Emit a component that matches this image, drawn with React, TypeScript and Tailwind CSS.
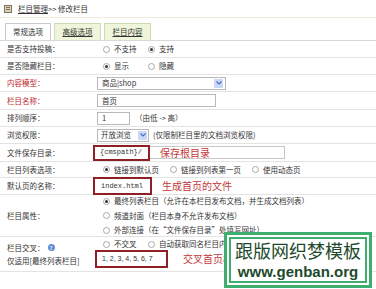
import React from "react";

const font = { fontFamily: '"Noto Sans CJK SC", "Noto Sans", sans-serif' };

const Radio: React.FC<{ on?: boolean }> = ({ on }) => (
  <span className="inline-flex h-[7px] w-[7px] shrink-0 items-center justify-center rounded-full border border-[#a8a8a8] bg-white">
    {on && <span className="h-[3px] w-[3px] rounded-full bg-[#333]" />}
  </span>
);

const Opt: React.FC<{ on?: boolean; label: React.ReactNode; slot?: string }> = ({ on, label, slot = "" }) => (
  <span className={`flex items-center gap-[4px] ${slot}`}>
    <Radio on={on} />
    <span>{label}</span>
  </span>
);

const Arrow: React.FC = () => (
  <span className="flex h-[9px] w-[9px] items-center justify-center rounded-[1px] bg-[#c9d8f6]">
    <svg width="6" height="4" viewBox="0 0 6 4">
      <path d="M0.5 0.5 L3 3 L5.5 0.5" stroke="#4a6fc0" strokeWidth="1.2" fill="none" />
    </svg>
  </span>
);

const Row: React.FC<{ label: React.ReactNode; h: string; children?: React.ReactNode; red?: boolean }> = ({
  label,
  h,
  children,
  red,
}) => (
  <div className={`flex border-b border-[#e3e3e3] ${h}`}>
    <div className={`flex w-[95px] shrink-0 items-center pl-[7px] ${red ? "text-[#c0282d]" : "text-[#333]"}`}>
      {label}
    </div>
    <div className="flex flex-1 items-center">{children}</div>
  </div>
);

export default function App() {
  return (
    <div className="relative h-[289px] w-[376px] overflow-hidden bg-white text-[7.5px] leading-none text-[#333]" style={font}>
      {/* header */}
      <div className="flex h-[17px] items-center gap-[6px] pl-[4px]">
        <svg width="8" height="8" viewBox="0 0 8 8">
          <rect x="0.5" y="0.5" width="7" height="7" fill="#d9d2b8" stroke="#7d7458" />
          <rect x="2" y="2" width="4" height="1" fill="#7d7458" />
          <rect x="2" y="4" width="4" height="1" fill="#7d7458" />
        </svg>
        <span>
          <span className="underline">栏目管理</span>&gt;&gt; 修改栏目
        </span>
      </div>

      {/* tabs */}
      <div className="flex h-[23px] items-end gap-[3px] border-t border-[#efeadb] pl-[5px]">
        <div className="flex h-[17px] w-[46px] items-center justify-center border border-b-0 border-[#c9c9c9] bg-white">
          常规选项
        </div>
        <div className="flex h-[17px] w-[47px] items-center justify-center border border-b-0 border-[#cfd9b5] bg-[#eef5da] underline">
          高级选项
        </div>
        <div className="flex h-[17px] w-[47px] items-center justify-center border border-b-0 border-[#cfd9b5] bg-[#eef5da] underline">
          栏目内容
        </div>
      </div>

      <div className="border-t border-[#d8d8d8]">
        <Row label="是否支持投稿：" h="h-[17px]">
          <div className="flex items-center pl-[8px]">
            <Opt label="不支持" slot="w-[45px]" />
            <Opt on label="支持" />
          </div>
        </Row>
        <Row label="是否隐藏栏目：" h="h-[17px]">
          <div className="flex items-center pl-[8px]">
            <Opt on label="显示" slot="w-[45px]" />
            <Opt label="隐藏" />
          </div>
        </Row>
        <Row label="内容模型：" h="h-[17px]" red>
          <div className="ml-[2px] flex h-[13px] w-[129px] items-center justify-between border border-[#b8b8b8] pl-[4px] pr-[2px]">
            <span>商品|shop</span>
            <Arrow />
          </div>
        </Row>
        <Row label="栏目名称：" h="h-[18px]" red>
          <div className="ml-[2px] flex h-[13px] w-[119px] items-center border border-[#b8b8b8] pl-[4px]">首页</div>
        </Row>
        <Row label="排列顺序：" h="h-[17px]">
          <div className="ml-[2px] flex h-[13px] w-[33px] items-center border border-[#b8b8b8] pl-[4px]">1</div>
          <span className="ml-[5px]">（由低 -&gt; 高）</span>
        </Row>
        <Row label="浏览权限：" h="h-[17px]">
          <div className="ml-[2px] flex h-[13px] w-[52px] items-center justify-between border border-[#b8b8b8] pl-[3px] pr-[1px]">
            <span>开放浏览</span>
            <Arrow />
          </div>
          <span className="ml-[4px]">(仅限制栏目里的文档浏览权限)</span>
        </Row>
        <Row label="文件保存目录：" h="h-[18px]">
          <div className="ml-[2px] flex h-[13px] w-[188px] items-center border border-[#c8c8c8]">
            <div className="-ml-[5px] flex h-[16px] w-[57px] items-center border-2 border-[#8e1f24] bg-white pl-[5px] text-[7px]" style={{ fontFamily: '"Liberation Mono", monospace' }}>
              {"{cmspath}/"}
            </div>
            <span className="ml-[10px] text-[10px] text-[#c4373a]">保存根目录</span>
          </div>
        </Row>
        <Row label="栏目列表选项：" h="h-[16px]">
          <div className="flex items-center gap-[11px] pl-[8px]">
            <Opt on label="链接到默认页" />
            <Opt label="链接到列表第一页" />
            <Opt label="使用动态页" />
          </div>
        </Row>
        <Row label="默认页的名称：" h="h-[17px]">
          <div className="-ml-[2px] flex h-[18px] w-[59px] items-center border-2 border-[#8e1f24] bg-white pl-[6px] text-[7px]" style={{ fontFamily: '"Liberation Mono", monospace' }}>
            index.html
          </div>
          <span className="ml-[10px] text-[10px] text-[#c4373a]">生成首页的文件</span>
        </Row>
        <Row label="栏目属性：" h="h-[42px]">
          <div className="flex flex-col gap-[7px] pl-[8px]">
            <Opt on label="最终列表栏目（允许在本栏目发布文档，并生成文档列表）" />
            <Opt label="频道封面（栏目本身不允许发布文档）" />
            <Opt
              label={
                <>
                  外部连接（在“文件保存目录”处填写<span className="underline">网址</span>）
                </>
              }
            />
          </div>
        </Row>
        <Row
          label={
            <div className="flex flex-col gap-[6px]">
              <span className="flex items-center gap-[3px]">
                栏目交叉：
                <span className="flex h-[7px] w-[7px] items-center justify-center rounded-full bg-[#5d8fd6] text-[5px] font-bold text-white">
                  ?
                </span>
              </span>
              <span>仅适用[最终列表栏目]</span>
            </div>
          }
          h="h-[35px]"
        >
          <div className="flex flex-col gap-[2px]">
            <div className="flex items-center pl-[8px]">
              <Opt label="不交叉" slot="w-[45px]" />
              <Opt label="自动获取同名栏目内容" />
            </div>
            <div className="flex items-center">
              <div className="flex h-[18px] w-[73px] items-center border-2 border-[#8e1f24] bg-white pl-[5px] text-[7px]" style={{ fontFamily: '"Liberation Sans", sans-serif' }}>
                1, 2, 3, 4, 5, 6, 7
              </div>
              <span className="ml-[15px] text-[10px] text-[#c4373a]">交叉首页栏</span>
            </div>
          </div>
        </Row>
      </div>

      {/* watermark */}
      <div className="absolute left-[224px] top-[232px] h-[56px] w-[148px] border-[3px] border-[#3fae6f] bg-white p-[2px]">
        <div className="flex h-full w-full flex-col items-center gap-[5px] border-2 border-[#3fae6f] pt-[2px] text-[#1d4a2c]">
          <span className="text-[18px] leading-[19px]">跟版网织梦模板</span>
          <span className="text-[15px] font-bold leading-[13px]" style={{ fontFamily: '"Liberation Sans", Arial, sans-serif' }}>
            www.genban.org
          </span>
        </div>
      </div>
    </div>
  );
}
